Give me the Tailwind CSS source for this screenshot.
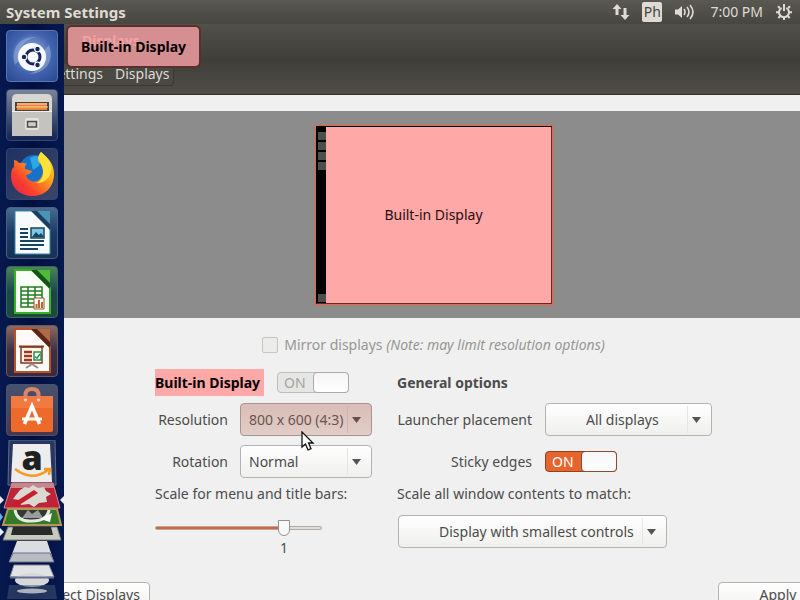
<!DOCTYPE html>
<html lang="en">
<head>
<meta charset="utf-8">
<meta name="viewport" content="width=device-width, initial-scale=1">
<title>System Settings</title>
<script src="https://cdn.jsdelivr.net/npm/@tailwindcss/browser@4"></script>
</head>
<body class="h-screen flex flex-col overflow-hidden bg-[#f0f0f0] font-['Noto_Sans','Open_Sans',sans-serif] text-sm text-[#4c4c4c]">

<!-- Top panel -->
<header class="h-6 shrink-0 flex items-center justify-between pl-[6px] pr-[7px] bg-linear-to-b from-[#5a5852] to-[#484641] text-[#dfdbd2]">
  <h1 class="text-[15px] leading-6 font-bold">System Settings</h1>
  <div class="flex items-center gap-3">
    <svg class="w-[18px] h-[18px]" viewBox="0 0 18 18" fill="#dfdbd2" aria-label="Network"><path d="M5 1 9.500 6H6.500v6h-3V6H.5zM13 17 8.500 12h3V5h3v7h3z"/></svg>
    <span class="w-5 h-5 rounded-xs bg-[#dfdbd2] text-[#45443f] text-sm leading-5 text-center">Ph</span>
    <svg class="w-[22px] h-[18px]" viewBox="0 0 22 18" fill="none" stroke="#dfdbd2" stroke-width="1.600" aria-label="Volume"><path d="M1 6.500h3L8 3v12l-4-3.500H1z" fill="#dfdbd2" stroke="none"/><path d="M10 6q2 3 0 6M13 4q4 5 0 10M16 2q6 7 0 14"/></svg>
    <span class="text-sm leading-6 pl-[2px]">7:00 PM</span>
    <svg class="w-[18px] h-[18px]" viewBox="0 0 18 18" fill="none" stroke="#dfdbd2" stroke-width="2" aria-label="Session"><path d="M6.600 4.800a5 5 0 1 0 4.800 0M9 1v7"/><path d="M4.700 5 3 3.300M13.300 5 15 3.300M4 9.300H1M17 9.300h-3M5.300 13l-2 2M12.700 13l2 2M9 14.200V17"/></svg>
  </div>
</header>

<div class="relative flex-1 min-h-0 flex flex-col">

  <!-- Window -->
  <div class="h-[71px] shrink-0 pl-[29px] pt-10 border-b border-[#33322e] bg-linear-to-b from-[#52504a] via-[#3f3e38] to-[#504d48]">
    <nav class="inline-flex h-[22px] rounded-b-sm border border-t-0 border-[#3a3935] bg-[#4a4944] text-[#dfdbd2] text-sm leading-5">
      <a href="#" class="w-[73px] flex justify-end whitespace-nowrap"><span>All Settings</span></a>
      <a href="#" class="pl-3 pr-1">Displays</a>
    </nav>
  </div>

  <main class="flex-1 flex flex-col min-h-0">
    <section class="mt-4 h-[207px] shrink-0 bg-[#8c8c8c] flex justify-center items-center pl-[68px]">
      <div class="w-60 h-[182px] bg-[#bd7767] p-[2px] flex">
        <div class="flex-1 flex border border-[#6d2823] border-t-black border-l-black bg-[#ffa8a8]">
          <div class="w-[9px] bg-black flex flex-col gap-[2px] items-center pt-[5px] pb-px">
            <i class="w-2 h-2 bg-[#4b504d]"></i><i class="w-2 h-2 bg-[#4b504d]"></i><i class="w-2 h-2 bg-[#4b504d]"></i><i class="w-2 h-2 bg-[#4b504d]"></i>
            <i class="w-2 h-2 bg-[#4b504d] mt-auto"></i>
          </div>
          <div class="flex-1 flex items-center justify-center pr-[10px] text-[#2b0c0c]">Built-in Display</div>
        </div>
      </div>
    </section>

    <form class="flex-1 flex flex-col items-center pl-[67px]">
      <label class="mt-[17px] h-5 flex items-center gap-[6px] leading-5 text-[#979793]">
        <input type="checkbox" disabled class="appearance-none w-4 h-4 rounded-xs border border-[#c5c5c3] bg-[#ececeb]">
        <span>Mirror displays <em>(Note: may limit resolution options)</em></span>
      </label>

      <div class="mt-[14px] flex gap-[25px]">
        <div class="w-[217px]">
          <div class="h-[27px] flex items-center gap-[13px]">
            <h2 class="w-[109px] leading-[27px] bg-[#ffa8a8] font-bold text-black whitespace-nowrap">Built-in Display</h2>
            <label class="relative w-[72px] h-[21px] flex items-center">
              <input type="checkbox" checked disabled aria-label="Built-in Display on" class="appearance-none absolute inset-0 rounded-sm border border-[#bdbdbb] bg-[#e6e6e5]">
              <span class="relative pl-[7px] text-[#a3a3a1]">ON</span>
              <span class="absolute right-0 top-0 w-9 h-[21px] rounded-sm border border-[#aaaaa8] bg-linear-to-b from-[#f5f5f5] to-white"></span>
            </label>
          </div>
          <div class="mt-[7px] grid grid-cols-[73px_132px] gap-x-3 gap-y-[9px] items-center">
            <label for="res" class="text-right whitespace-nowrap">Resolution</label>
            <div class="relative">
              <select id="res" class="appearance-none w-full h-[33px] pl-2 rounded-sm border border-[#a7948f] bg-linear-to-b from-[#d9bdb6] to-[#e2cdc8] text-[#6a5550]"><option>800 x 600 (4:3)</option></select>
              <svg class="absolute right-[11px] top-[14px] w-[9px] h-[6px] pointer-events-none" viewBox="0 0 9 6"><path d="M0 0h9L4.500 6z" fill="#6a4d47"/></svg>
              <i class="absolute right-6 top-[3px] h-[27px] border-l border-[#cfb5af] pointer-events-none"></i>
            </div>
            <label for="rot" class="text-right">Rotation</label>
            <div class="relative">
              <select id="rot" class="appearance-none w-full h-[33px] pl-2 rounded-sm border border-[#b3b3b1] bg-linear-to-b from-white to-[#efefee]"><option>Normal</option></select>
              <svg class="absolute right-[11px] top-[14px] w-[9px] h-[6px] pointer-events-none" viewBox="0 0 9 6"><path d="M0 0h9L4.500 6z" fill="#555"/></svg>
              <i class="absolute right-6 top-[3px] h-[27px] border-l border-[#e6e6e5] pointer-events-none"></i>
            </div>
          </div>
          <label for="scale" class="mt-[6px] block leading-5 whitespace-nowrap">Scale for menu and title bars:</label>
          <div class="relative mt-[14px] w-[167px] h-5">
            <input id="scale" type="range" min="0" max="1.250" step="0.125" value="1" class="appearance-none absolute inset-x-0 top-2 w-full h-1 rounded-xs border border-[#b3a9a5] bg-[linear-gradient(90deg,#d5633c_78%,#dedddb_78%)] [&::-webkit-slider-thumb]:appearance-none [&::-webkit-slider-thumb]:w-3 [&::-webkit-slider-thumb]:h-4 [&::-webkit-slider-thumb]:rounded-t-sm [&::-webkit-slider-thumb]:rounded-b-full [&::-webkit-slider-thumb]:border [&::-webkit-slider-thumb]:border-[#92928f] [&::-webkit-slider-thumb]:bg-[#f8f8f8]">
          </div>
          <output for="scale" class="block w-[258px] text-center leading-5">1</output>
        </div>

        <div class="w-[315px]">
          <h2 class="leading-[27px] font-bold">General options</h2>
          <div class="mt-[7px] grid grid-cols-[135px_167px] gap-x-[13px] gap-y-[9px] items-center">
            <label for="launcher" class="text-right whitespace-nowrap">Launcher placement</label>
            <div class="relative">
              <select id="launcher" class="appearance-none w-full h-[33px] pl-10 rounded-sm border border-[#b3b3b1] bg-linear-to-b from-white to-[#efefee]"><option>All displays</option></select>
              <svg class="absolute right-[11px] top-[14px] w-[9px] h-[6px] pointer-events-none" viewBox="0 0 9 6"><path d="M0 0h9L4.500 6z" fill="#555"/></svg>
              <i class="absolute right-6 top-[3px] h-[27px] border-l border-[#e6e6e5] pointer-events-none"></i>
            </div>
            <label for="sticky" class="text-right">Sticky edges</label>
            <div class="h-[33px] flex items-center">
              <label class="relative w-[72px] h-[21px] flex items-center">
                <input id="sticky" type="checkbox" checked class="appearance-none absolute inset-0 rounded-sm border border-[#963f20] bg-[#e5652f]">
                <span class="relative pl-[7px] text-white">ON</span>
                <span class="absolute right-0 top-0 w-9 h-[21px] rounded-sm border border-[#8c4a35] bg-linear-to-b from-[#f5f5f5] to-white"></span>
              </label>
            </div>
          </div>
          <label for="match" class="mt-[6px] block leading-5">Scale all window contents to match:</label>
          <div class="relative mt-[11px] ml-px w-[269px]">
            <select id="match" class="appearance-none w-full h-[33px] pl-10 rounded-sm border border-[#b3b3b1] bg-linear-to-b from-white to-[#efefee]"><option>Display with smallest controls</option></select>
            <svg class="absolute right-[11px] top-[14px] w-[9px] h-[6px] pointer-events-none" viewBox="0 0 9 6"><path d="M0 0h9L4.500 6z" fill="#555"/></svg>
            <i class="absolute right-6 top-[3px] h-[27px] border-l border-[#e6e6e5] pointer-events-none"></i>
          </div>
        </div>
      </div>
    </form>

    <footer class="h-[18px] shrink-0 flex justify-between pl-[29px] whitespace-nowrap">
      <button class="h-[33px] px-[9px] rounded-sm border border-[#b3b3b1] bg-linear-to-b from-white to-[#efefee] leading-6 pb-2">Detect Displays</button>
      <button class="h-[33px] w-24 -mr-[14px] pl-[24px] rounded-sm border border-[#b3b3b1] bg-linear-to-b from-white to-[#efefee] leading-6 pb-2">Apply</button>
    </footer>
  </main>

  <!-- Launcher -->
  <aside class="absolute left-0 top-0 bottom-0 w-16 overflow-hidden bg-linear-to-r from-[#06194f] via-[#020f40] to-[#06194f] pt-[6px] pl-[6px] flex flex-col gap-[7px]">
    <button aria-label="Search" class="w-[52px] h-[52px] shrink-0 rounded-sm border border-[#5b76b5] bg-[radial-gradient(circle_at_50%_45%,#a3b7e3,#4163ae_55%,#29478f)]">
      <svg class="w-full h-full" viewBox="0 0 50 50"><path d="M8 34C3 18 12 5 30 6 18 8 11 16 13 28zM42 14c6 16-3 29-21 29 12-3 19-11 16-23z" fill="#b5c6eb" fill-opacity=".4"/><circle cx="25" cy="26" r="14" fill="#f7f9ff"/><circle cx="26" cy="26" r="7" fill="none" stroke="#15265a" stroke-width="3"/><g fill="#15265a" stroke="#f7f9ff" stroke-width="1.200"><circle cx="17" cy="26" r="2.800"/><circle cx="30.500" cy="18" r="2.800"/><circle cx="30.500" cy="34" r="2.800"/></g></svg>
    </button>
    <button aria-label="Files" class="w-[52px] h-[52px] shrink-0 rounded-sm border border-[#39496f] bg-linear-to-b from-[#7b8498] to-[#142451]">
      <svg class="w-full h-full" viewBox="0 0 50 50"><path d="M5 9q0-5 5-5h30q5 0 5 5v37H5z" fill="#d7d6d2"/><path d="M8 12h34v9H8z" fill="#4a413b"/><path d="M10 13h30v7H10z" fill="#e8853c"/><path d="M10 14h30M9 17h32" stroke="#ffd6a6"/><path d="M5 21h40v25H5z" fill="#c4c3bf"/><path d="M5 21.500h40" stroke="#f1f0ed"/><rect x="18" y="28" width="14" height="12" rx="2" fill="#e5e4e0"/><rect x="20.500" y="31.500" width="9" height="5.500" fill="#ccc" stroke="#4b4b48" stroke-width="1.500"/></svg>
    </button>
    <button aria-label="Firefox" class="w-[52px] h-[52px] shrink-0 rounded-sm border border-[#34466f] bg-linear-to-br from-[#1d3262] to-[#3b4668]">
      <svg class="w-full h-full" viewBox="0 0 50 50"><defs><linearGradient id="fx" x1="1" y1="0" x2="0" y2="1"><stop stop-color="#ffe72e"/><stop offset=".4" stop-color="#ff9a1e"/><stop offset=".7" stop-color="#fa3f2e"/><stop offset="1" stop-color="#e02052"/></linearGradient></defs><circle cx="27" cy="21" r="15" fill="#1672c8"/><path d="M23 9q5-4 11 0l-2 8-6 4z" fill="#2aa7e5"/><path d="M7 11q3 0 5 3 4-1 8 1-3 2-2 5l7 2q-1 3-6 4c1 6 9 9 14 4 6-7 2-14-2-18q-1-4 3-9c6 5 13 11 13 22 0 13-9 22-21 22C13 47 4 39 4 27q0-7 3-9z" fill="url(#fx)"/><path d="M34 3c-6 7 1 10 2 18 1 7-3 12-7 13 9 1 17-7 15-18-1-5-6-9-10-13" fill="#ffe238"/></svg>
    </button>
    <button aria-label="Writer" class="w-[52px] h-[52px] shrink-0 rounded-sm border border-[#476080] bg-linear-to-b from-[#4a6c8f] via-[#1b3966] to-[#183154]">
      <svg class="w-full h-full" viewBox="0 0 50 50"><path d="M24 3h19v18z" fill="#4b93b8"/><path d="M8 3h17l18 18v25H8z" fill="#f7fafc" stroke="#3286a8"/><path d="M24 3h6l13 13v6z" fill="#163f61"/><path d="M13 21h8M13 25h8M13 29h8M13 33h24M13 37h24M13 41h18" stroke="#17445f" stroke-width="2"/><path d="M24 20h13v10H24z" fill="#80c6e3" stroke="#17445f" stroke-width="1.500"/><path d="m25 29 4-5 3 3 2-2 3 4" fill="#17445f"/></svg>
    </button>
    <button aria-label="Calc" class="w-[52px] h-[52px] shrink-0 rounded-sm border border-[#3c6757] bg-linear-to-b from-[#4a8458] via-[#1b4650] to-[#1d4a3c]">
      <svg class="w-full h-full" viewBox="0 0 50 50"><path d="M24 3h19v18z" fill="#4cbb35"/><path d="M8 3h17l18 18v25H8z" fill="#f8fff5" stroke="#36b321" stroke-width="2"/><path d="M24 3h6l13 13v6z" fill="#16521a"/><path d="M14 20h21v20H14zM14 24h21M14 28h21M14 32h21M14 36h21M21 20v20M28 20v20" fill="none" stroke="#237c24" stroke-width="1.500"/><path d="M27 31h10v11H27z" fill="#fff" stroke="#8b542e"/><path d="M29.500 41v-4M32 41v-8M35 41v-6" stroke="#c76029" stroke-width="2"/></svg>
    </button>
    <button aria-label="Impress" class="w-[52px] h-[52px] shrink-0 rounded-sm border border-[#675a5e] bg-linear-to-b from-[#8c6a5e] via-[#3c3045] to-[#3b2940]">
      <svg class="w-full h-full" viewBox="0 0 50 50"><path d="M24 3h19v18z" fill="#b06a48"/><path d="M8 3h17l18 18v25H8z" fill="#fffaf7" stroke="#b5542a" stroke-width="2"/><path d="M24 3h6l13 13v6z" fill="#582716"/><path d="M14 21h21v16H14z" fill="#fff5ec" stroke="#803c20" stroke-width="1.500"/><path d="M12 20.500h25" stroke="#803c20" stroke-width="2"/><path d="M25 38l-6 4M25 38l6 4" stroke="#9c8a82" stroke-width="2"/><path d="M17 26h8M17 30h8M17 34h8" stroke="#9a3b1d" stroke-width="2.500"/><path d="M27 26h7v8h-7z" fill="#fff" stroke="#28904c" stroke-width="1.500"/><path d="m28 31 2 1 3-4" fill="none" stroke="#28904c" stroke-width="1.500"/></svg>
    </button>
    <button aria-label="Ubuntu Software" class="w-[52px] h-[52px] shrink-0 rounded-sm border border-[#495371] bg-linear-to-b from-[#46516f] to-[#493849]">
      <svg class="w-full h-full" viewBox="0 0 50 50"><path d="M4 11h42v34q0 2-2 2H6q-2 0-2-2z" fill="#ee6a2a"/><path d="M4 11h42v12H4z" fill="#f07a3f"/><path d="M18.500 15V10q0-6 6.500-6t6.500 6v5" fill="none" stroke="#dd8468" stroke-width="4"/><circle cx="18.500" cy="15" r="1.500" fill="#ffd0b8"/><circle cx="31.500" cy="15" r="1.500" fill="#ffd0b8"/><path d="m17.500 39 7.500-18 7.500 18" fill="none" stroke="#fff" stroke-width="3.500"/><path d="M15 34h20" stroke="#fff" stroke-width="3"/></svg>
    </button>
    <!-- Folded launcher items -->
    <svg class="w-16 h-[160px] -ml-[6px] -mt-[3px] shrink-0" viewBox="0 0 64 160" aria-label="More applications">
      <path d="M9 0h46l1 45H8z" fill="#28375f" stroke="#5d6c8e"/><path d="M13 4h37l2 38H11z" fill="#ededed"/>
      <text x="32" y="30" text-anchor="middle" font-family="Open Sans" font-size="34" font-weight="800" fill="#202020">a</text><path d="M15 29q17 13 33 1M44 29h6l-1 6" fill="none" stroke="#f69a21" stroke-width="2.500"/>
      <path d="M12 43h41l7 25H4z" fill="#bd2437" stroke="#de8790"/><path d="M12 43h41l1 5H11z" fill="#c7858c"/><path d="m20 50 5-3 4 1 4-3 5 3 6-1 2 4 5 3-5 3 1 5-8 1-5 4-5-3-8 1-2-5-6-1 3-4z" fill="#d9d8d1"/><path d="m12 64 22-14 4 3-22 14z" fill="#c91d2d"/>
      <path d="M8 69h49l4 16H3z" fill="#347b29" stroke="#b49754" stroke-width="2"/><path d="M15 70q2 12 17 11 15 0 17-11" fill="#343936" stroke="#e6e9e4" stroke-width="3"/><path d="m22 78 6-8 4 4 6-4 5 8z" fill="#999d9a"/><path d="m40 79 12-6-2 9z" fill="#fff"/>
      <path d="M8 87h49l4 13H3z" fill="#c7c8bf" stroke="#7b806d"/><path d="M13 87h38l2 8H11z" fill="#292b29"/>
      <path d="M17 101h30l7 21H9z" fill="#dcdde0"/><path d="M13 113h37l4 9H9z" fill="#b9bcc3" stroke="#69718a"/>
      <path d="M14 125h35l5 12H10z" fill="#e2e3e5" stroke="#848a9a"/><ellipse cx="32" cy="140" rx="17" ry="7" fill="#d6d8dc"/><path d="M10 137.500h44" stroke="#69718a" stroke-width="2"/><path d="M9 145h46l2 14H7z" fill="#485876" fill-opacity=".5"/><ellipse cx="32" cy="151" rx="15" ry="2.500" fill="#a8b1bd"/>
      <path d="m0 56 4 4-4 4zM64 56l-4 4 4 4zM0 88l4 4-4 4z" fill="#e8edf7"/><path d="m0 73 3 4-3 4z" fill="#5eb3e5"/>
    </svg>
  </aside>

  <!-- Monitor label shown over the title bar -->
  <div class="absolute left-[66px] top-px w-[135px] h-[43px] rounded-md border-2 border-[#59302c] bg-[#d68f91] flex items-center justify-center text-black font-bold whitespace-nowrap overflow-hidden">
    <span class="absolute left-[14px] top-[2px] leading-6 text-[#f2a3a3]" aria-hidden="true">Displays</span>
    <span class="relative">Built-in Display</span>
  </div>

  <!-- Mouse pointer -->
  <svg class="absolute left-[301px] top-[407px] w-[14px] h-5 pointer-events-none" viewBox="0 0 14 20"><path d="M1 1v15l3.500-3 2.500 6 3-1.300L7.500 12H12z" fill="#fff" stroke="#111" stroke-width="1.300"/></svg>
</div>
</body>
</html>
